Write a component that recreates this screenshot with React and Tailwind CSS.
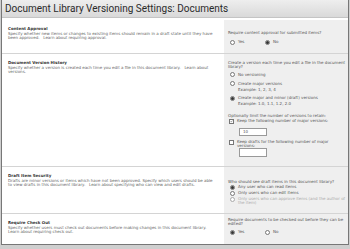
import React from 'react';

const font = { fontFamily: '"DejaVu Sans", Verdana, sans-serif' };

function Radio({ checked, label, className = '' }) {
    return (
        <div className={`flex items-center gap-[3px] h-[5px] ${className}`}>
            <span className="w-[5px] h-[5px] rounded-full border-[0.5px] border-[#777] bg-white flex items-center justify-center shrink-0">
                {checked && <span className="w-[3px] h-[3px] rounded-full bg-[#333]" />}
            </span>
            <span>{label}</span>
        </div>
    );
}

function Check({ checked }) {
    return (
        <span className="w-[5px] h-[5px] border-[0.5px] border-[#777] bg-white flex items-center justify-center shrink-0">
            {checked && (
                <svg viewBox="0 0 10 10" className="w-[5px] h-[5px]">
                    <path d="M2 5l2 2 4-5" fill="none" stroke="#333" strokeWidth="1.6" />
                </svg>
            )}
        </span>
    );
}

function Section({ title, text, right, height, rightPad }) {
    return (
        <div className={`flex ${height}`}>
            <div className="w-[222px] pl-[6px] pr-[10px] pt-[5.5px] shrink-0">
                <div className="text-[4px] font-bold text-[#333] leading-[5px]">{title}</div>
                <div className="text-[4px] leading-[4px] text-[#666] mt-[1.8px]">{text}</div>
            </div>
            <div className={`flex-1 bg-[#efefef] pl-[4px] pr-[0.5px] text-[4px] leading-[4px] text-[#555] ${rightPad}`}>
                {right}
            </div>
        </div>
    );
}

export default function App() {
    return (
        <div className="w-[350px] h-[249px] bg-[#cfcfcf] overflow-hidden" style={font}>
            <div className="w-[348px] h-[245px] ml-[1px] bg-white border-l border-r border-b border-[#777]">
                <div className="h-[18px] bg-gradient-to-b from-[#eeeeee] to-[#d9d9d9] border-b border-[#c4c4c4] px-[3px] flex items-center">
                    <span className="text-[10px] text-[#2b2b2b] leading-none" style={{ fontFamily: 'Roboto, "Open Sans", sans-serif' }}>
                        Document Library Versioning Settings: Documents
                    </span>
                </div>
                <div className="pt-[2px] flex flex-col">
                    <Section
                        title="Content Approval"
                        height="h-[34px] border-b border-[#d4d4d4]"
                        rightPad="pt-[11px]"
                        text={'Specify whether new items or changes to existing items should remain in a draft state until they have been approved.\u00a0\u00a0 Learn about requiring approval.'}
                        right={
                            <>
                                <div>Require content approval for submitted items?</div>
                                <div className="flex mt-[4.5px] pl-[2px]">
                                    <Radio label="Yes" className="w-[35px]" />
                                    <Radio label="No" checked />
                                </div>
                            </>
                        }
                    />
                    <Section
                        title="Document Version History"
                        height="h-[113px] border-b border-[#d4d4d4]"
                        rightPad="pt-[6.5px]"
                        text={'Specify whether a version is created each time you edit a file in this document library.\u00a0\u00a0 Learn about versions.'}
                        right={
                            <>
                                <div>Create a version each time you edit a file in the document library?</div>
                                <div className="pl-[2px]">
                                    <Radio label="No versioning" className="mt-[3.8px]" />
                                    <Radio label="Create major versions" className="mt-[4px]" />
                                    <div className="pl-[8px] mt-[1.5px]">Example: 1, 2, 3, 4</div>
                                    <Radio label="Create major and minor (draft) versions" checked className="mt-[3.8px]" />
                                    <div className="pl-[8px] mt-[1.2px]">Example: 1.0, 1.1, 1.2, 2.0</div>
                                </div>
                                <div className="mt-[8.7px]">Optionally limit the number of versions to retain:</div>
                                <div className="flex items-center gap-[3px] pl-[1px] mt-[0.5px] h-[5px]">
                                    <Check checked />
                                    <span>Keep the following number of major versions:</span>
                                </div>
                                <div className="ml-[11px] mt-[3.8px] w-[28px] h-[8px] bg-white border-[0.5px] border-[#999] pl-[3px] flex items-center">10</div>
                                <div className="flex items-start gap-[3px] pl-[1px] mt-[4.3px]">
                                    <Check />
                                    <span>Keep drafts for the following number of major versions:</span>
                                </div>
                                <div className="ml-[11px] w-[28px] h-[9px] bg-white border-[0.5px] border-[#999]" />
                            </>
                        }
                    />
                    <Section
                        title="Draft Item Security"
                        height="h-[47px] border-b border-[#d4d4d4]"
                        rightPad="pt-[12.5px]"
                        text={'Drafts are minor versions or items which have not been approved. Specify which users should be able to view drafts in this document library.\u00a0\u00a0 Learn about specifying who can view and edit drafts.'}
                        right={
                            <>
                                <div>Who should see draft items in this document library?</div>
                                <div className="pl-[2px]">
                                    <Radio label="Any user who can read items" checked className="mt-[1px]" />
                                    <Radio label="Only users who can edit items" className="mt-[1px]" />
                                    <div className="flex items-start gap-[3px] text-[#aaa] mt-[1px]">
                                        <span className="w-[5px] h-[5px] rounded-full border-[0.5px] border-[#aaa] bg-white shrink-0" />
                                        <span>Only users who can approve items (and the author of the item)</span>
                                    </div>
                                </div>
                            </>
                        }
                    />
                    <Section
                        title="Require Check Out"
                        height="h-[30px]"
                        rightPad="pt-[4px]"
                        text={'Specify whether users must check out documents before making changes in this document library.\u00a0\u00a0 Learn about requiring check out.'}
                        right={
                            <>
                                <div>Require documents to be checked out before they can be edited?</div>
                                <div className="flex mt-[3.5px] pl-[2px]">
                                    <Radio label="Yes" checked className="w-[35px]" />
                                    <Radio label="No" />
                                </div>
                            </>
                        }
                    />
                </div>
            </div>
        </div>
    );
}
